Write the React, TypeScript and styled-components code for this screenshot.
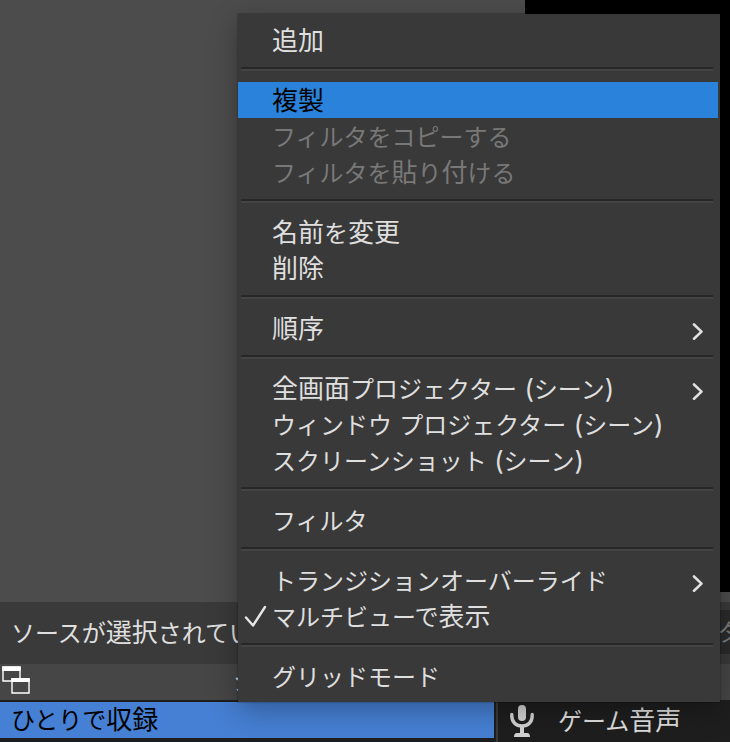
import React from "react";
import styled, { createGlobalStyle } from "styled-components";

const GlobalStyle = createGlobalStyle`
  * { box-sizing: border-box; }
  html, body, #root { height: 100%; }
  body {
    margin: 0;
    overflow: hidden;
    background: #1e1e1e;
    color: #dfdfdf;
    font-family: Inter, "Noto Sans CJK JP", sans-serif;
    font-size: 26px;
    line-height: 34px;
  }
`;

const Window = styled.div`
  position: relative;
  display: flex;
  flex-direction: column;
  height: 100%;
  min-height: 742px;
  overflow: hidden;
`;

const Preview = styled.div`
  display: flex;
  flex: 1;
  background: #4c4c4c;
`;

const Backdrop = styled.div`
  flex: 525;
`;

const Canvas = styled.div`
  flex: 205;
  margin-bottom: 10px;
  background: #000;
`;

const SourceBar = styled.div`
  display: flex;
  align-items: center;
  justify-content: space-between;
  height: 62px;
  padding: 0 0 2px 11px;
  background: #3a3a3a;
  white-space: nowrap;
`;

const FilterButton = styled.button`
  height: 44px;
  width: 120px;
  margin-right: -20px;
  padding: 0 0 0 16px;
  border: 0;
  background: #2b2b2b;
  color: #7a7a7a;
  font: inherit;
  text-align: left;
  white-space: nowrap;
`;

const DockHeader = styled.div`
  display: flex;
  align-items: center;
  gap: 203px;
  height: 36px;
  padding: 0 0 4px 2px;
  background: #464646;
`;

const Docks = styled.div`
  display: grid;
  grid-template-columns: 494fr 236fr;
  height: 42px;
  border-top: 2px solid #1e1e1e;
`;

const SceneList = styled.div`
  border-bottom: 4px solid #1e1e1e;
`;

const SceneRow = styled.button`
  display: block;
  width: 100%;
  height: 36px;
  padding: 0 11px;
  border: 0;
  background: #4680d4;
  color: #000;
  font: inherit;
  text-align: left;
`;

const Mixer = styled.div`
  display: flex;
  align-items: center;
  gap: 24px;
  padding: 0 0 4px 12px;
  margin-left: 2px;
  border-left: 2px solid #3a3a3a;
  background: #1e1e1e;
`;

const Menu = styled.div`
  position: absolute;
  top: 14px;
  left: 238px;
  right: 10px;
  padding: 8px 0;
  background: #393939;
  box-shadow: 0 0 1px 1px rgba(0, 0, 0, 0.15), 0 8px 28px rgba(0, 0, 0, 0.3);
`;

const MenuItem = styled.button<{ $active?: boolean }>`
  display: flex;
  align-items: center;
  width: calc(100% - 2px);
  height: 36px;
  padding: 0 14px 0 6px;
  border: 0;
  background: ${(p) => (p.$active ? "#2a82da" : "transparent")};
  color: ${(p) => (p.$active ? "#000" : "#dfdfdf")};
  font: inherit;
  text-align: left;
  white-space: nowrap;
  &:disabled { color: #787878; }
`;

const Mark = styled.span`
  display: flex;
  flex: none;
  width: 28px;
`;

const Text = styled.span`
  flex: 1;
  padding-top: 2px;
  white-space: pre;
`;

const Kana = styled.span`
  font-size: 24px;
`;

const Separator = styled.hr`
  height: 4px;
  margin: 9px 7px 11px 3px;
  border: 0;
  border-top: 2px solid #272727;
  border-bottom: 2px solid #444;
`;

function Label({ children }: { children: string }) {
  const runs = children.match(/[\u3040-\u30ff]+|[^\u3040-\u30ff]+/g) ?? [];
  return (
    <Text>
      {runs.map((run, i) =>
        /[\u3040-\u30ff]/.test(run) ? <Kana key={i}>{run}</Kana> : run
      )}
    </Text>
  );
}

const CheckIcon = () => (
  <svg width="24" height="24" viewBox="0 0 24 24" fill="none" stroke="#e6e6e6" strokeWidth="2.4" strokeLinecap="round" strokeLinejoin="round">
    <path d="M2 13.5 L9 21.5 L21 3" />
  </svg>
);

const ChevronIcon = () => (
  <svg width="12" height="24" viewBox="0 0 12 24" fill="none" stroke="#e0e0e0" strokeWidth="2.6" strokeLinecap="round" strokeLinejoin="round">
    <path d="M2 8.5 L9.5 15.6 L2 22.7" />
  </svg>
);

const FloatIcon = () => (
  <svg width="28" height="28" viewBox="0 0 28 28">
    <path d="M1 1H18V15H1Z" fill="#464646" stroke="#fff" strokeWidth="1.4" />
    <path d="M0.3 0.5H18.7V5H0.3Z" fill="#fff" />
    <path d="M10 13H27V27H10Z" fill="#464646" stroke="#fff" strokeWidth="1.4" />
    <path d="M9.3 12H27.7V16H9.3Z" fill="#fff" />
  </svg>
);

const MicIcon = () => (
  <svg width="24" height="32" viewBox="0 0 24 32" fill="none">
    <rect x="8" y="0" width="8" height="16" rx="4" fill="#d2d2d2" />
    <path d="M1.8 9.5V11C1.8 17 6 21 12 21S22.2 17 22.2 11V9.5" stroke="#d2d2d2" strokeWidth="3.4" strokeLinecap="round" />
    <path d="M10 21H14V28H17Q20 28 20 32H4Q4 28 7 28H10Z" fill="#d2d2d2" />
  </svg>
);

type Entry = {
  label: string;
  active?: boolean;
  disabled?: boolean;
  checked?: boolean;
  submenu?: boolean;
};

const groups: Entry[][] = [
  [{ label: "追加" }],
  [
    { label: "複製", active: true },
    { label: "フィルタをコピーする", disabled: true },
    { label: "フィルタを貼り付ける", disabled: true },
  ],
  [{ label: "名前を変更" }, { label: "削除" }],
  [{ label: "順序", submenu: true }],
  [
    { label: "全画面プロジェクター (シーン)", submenu: true },
    { label: "ウィンドウ プロジェクター (シーン)" },
    { label: "スクリーンショット (シーン)" },
  ],
  [{ label: "フィルタ" }],
  [
    { label: "トランジションオーバーライド", submenu: true },
    { label: "マルチビューで表示", checked: true },
  ],
  [{ label: "グリッドモード" }],
];

export default function App() {
  return (
    <>
      <GlobalStyle />
      <Window>
        <Preview>
          <Backdrop />
          <Canvas />
        </Preview>
        <SourceBar>
          <Label>ソースが選択されてい</Label>
          <FilterButton disabled>
            <Label>フィルタ</Label>
          </FilterButton>
        </SourceBar>
        <DockHeader>
          <FloatIcon />
          <Label>シーン</Label>
        </DockHeader>
        <Docks>
          <SceneList>
            <SceneRow>
              <Label>ひとりで収録</Label>
            </SceneRow>
          </SceneList>
          <Mixer>
            <MicIcon />
            <Label>ゲーム音声</Label>
          </Mixer>
        </Docks>
        <Menu role="menu">
          {groups.map((group, g) => (
            <React.Fragment key={g}>
              {g > 0 && <Separator />}
              {group.map((item) => (
                <MenuItem
                  key={item.label}
                  role={item.checked ? "menuitemcheckbox" : "menuitem"}
                  aria-checked={item.checked}
                  aria-haspopup={item.submenu ? "menu" : undefined}
                  $active={item.active}
                  disabled={item.disabled}
                >
                  <Mark>{item.checked && <CheckIcon />}</Mark>
                  <Label>{item.label}</Label>
                  {item.submenu && <ChevronIcon />}
                </MenuItem>
              ))}
            </React.Fragment>
          ))}
        </Menu>
      </Window>
    </>
  );
}
